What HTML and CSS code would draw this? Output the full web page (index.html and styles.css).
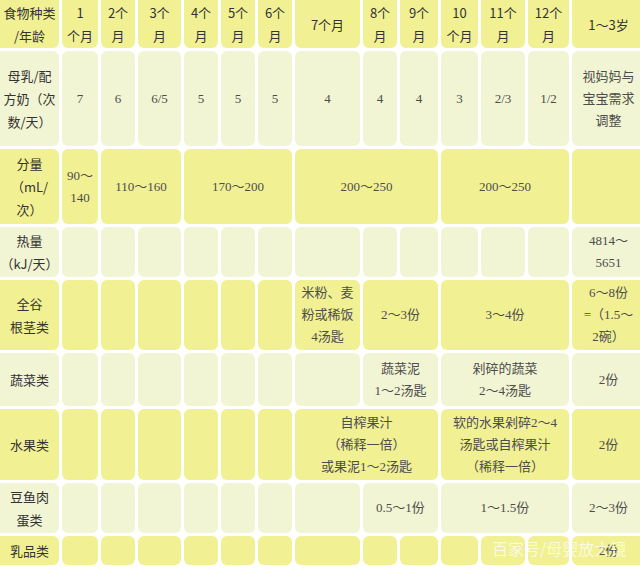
FILE: index.html
```html
<!DOCTYPE html>
<html lang="zh">
<head>
<meta charset="utf-8">
<link rel="stylesheet" href="styles.css">
</head>
<body>
<div class="frame">
<div class="grid">
  <!-- header -->
  <div class="c y lab">食物种类<br>/年龄</div>
  <div class="c y hd">1<br>个月</div>
  <div class="c y hd">2个<br>月</div>
  <div class="c y hd">3个<br>月</div>
  <div class="c y hd">4个<br>月</div>
  <div class="c y hd">5个<br>月</div>
  <div class="c y hd">6个<br>月</div>
  <div class="c y hd">7个月</div>
  <div class="c y hd">8个<br>月</div>
  <div class="c y hd">9个<br>月</div>
  <div class="c y hd">10<br>个月</div>
  <div class="c y hd">11个<br>月</div>
  <div class="c y hd">12个<br>月</div>
  <div class="c y hd">1～3岁</div>

  <!-- 母乳 -->
  <div class="c p lab">母乳/配<br>方奶（次<br>数/天）</div>
  <div class="c p d">7</div>
  <div class="c p d">6</div>
  <div class="c p d">6/5</div>
  <div class="c p d">5</div>
  <div class="c p d">5</div>
  <div class="c p d">5</div>
  <div class="c p d">4</div>
  <div class="c p d">4</div>
  <div class="c p d">4</div>
  <div class="c p d">3</div>
  <div class="c p d">2/3</div>
  <div class="c p d">1/2</div>
  <div class="c p d">视妈妈与<br>宝宝需求<br>调整</div>

  <!-- 分量 -->
  <div class="c y lab">分量<br>（mL/<br>次）</div>
  <div class="c y d">90～<br>140</div>
  <div class="c y d s2">110～160</div>
  <div class="c y d s3">170～200</div>
  <div class="c y d s3">200～250</div>
  <div class="c y d s3">200～250</div>
  <div class="c y d"></div>

  <!-- 热量 -->
  <div class="c p lab">热量<br>（kJ/天）</div>
  <div class="c p"></div><div class="c p"></div><div class="c p"></div><div class="c p"></div><div class="c p"></div><div class="c p"></div>
  <div class="c p"></div><div class="c p"></div><div class="c p"></div><div class="c p"></div><div class="c p"></div><div class="c p"></div>
  <div class="c p d">4814～<br>5651</div>

  <!-- 全谷 -->
  <div class="c y lab">全谷<br>根茎类</div>
  <div class="c y"></div><div class="c y"></div><div class="c y"></div><div class="c y"></div><div class="c y"></div><div class="c y"></div>
  <div class="c y d">米粉、麦<br>粉或稀饭<br>4汤匙</div>
  <div class="c y d s2">2～3份</div>
  <div class="c y d s3">3～4份</div>
  <div class="c y d">6～8份<br>=（1.5～<br>2碗）</div>

  <!-- 蔬菜 -->
  <div class="c p lab">蔬菜类</div>
  <div class="c p"></div><div class="c p"></div><div class="c p"></div><div class="c p"></div><div class="c p"></div><div class="c p"></div>
  <div class="c p"></div>
  <div class="c p d s2">蔬菜泥<br>1～2汤匙</div>
  <div class="c p d s3">剁碎的蔬菜<br>2～4汤匙</div>
  <div class="c p d">2份</div>

  <!-- 水果 -->
  <div class="c y lab">水果类</div>
  <div class="c y"></div><div class="c y"></div><div class="c y"></div><div class="c y"></div><div class="c y"></div><div class="c y"></div>
  <div class="c y d s3">自榨果汁<br>（稀释一倍）<br>或果泥1～2汤匙</div>
  <div class="c y d s3">软的水果剁碎2～4<br>汤匙或自榨果汁<br>（稀释一倍）</div>
  <div class="c y d">2份</div>

  <!-- 豆鱼肉蛋 -->
  <div class="c p lab">豆鱼肉<br>蛋类</div>
  <div class="c p"></div><div class="c p"></div><div class="c p"></div><div class="c p"></div><div class="c p"></div><div class="c p"></div>
  <div class="c p"></div>
  <div class="c p d s2">0.5～1份</div>
  <div class="c p d s3">1～1.5份</div>
  <div class="c p d">2～3份</div>

  <!-- 乳品 -->
  <div class="c y lab">乳品类</div>
  <div class="c y"></div><div class="c y"></div><div class="c y"></div><div class="c y"></div><div class="c y"></div><div class="c y"></div>
  <div class="c y"></div><div class="c y"></div><div class="c y"></div><div class="c y"></div><div class="c y"></div><div class="c y"></div>
  <div class="c y d">2份</div>
</div>
<div class="mark">百家号/母婴放大镜</div>
</div>
</body>
</html>
```

FILE: styles.css
```css
html, body {
  margin: 0;
  padding: 0;
  background: #ffffff;
}
body {
  width: 640px;
  height: 568px;
  overflow: hidden;
}
.frame {
  position: relative;
  width: 640px;
  height: 568px;
  overflow: hidden;
}
.grid {
  display: grid;
  margin: -5px 0 0 -5px;
  grid-template-columns: 64px 36px 34px 43px 34px 34px 34px 65px 34px 38px 37px 44px 41px 73px;
  grid-template-rows: 53px 95px 75px 50px 70px 53px 71px 50px 29px;
  gap: 3px;
  background: #ffffff;
}
.c {
  border-radius: 6px;
  display: flex;
  align-items: center;
  justify-content: center;
  text-align: center;
}
.y { background: #f1f093; }
.p { background: #f2f5d3; }
.lab {
  font-family: "Noto Sans CJK SC", "Noto Sans", sans-serif;
  font-size: 13px;
  line-height: 23px;
  color: #333333;
  padding-left: 5px;
}
.grid > .lab:first-child,
.grid > .hd {
  padding-top: 5px;
}
.hd {
  font-family: "Noto Sans CJK SC", "Noto Sans", sans-serif;
  font-size: 13px;
  line-height: 23px;
  color: #333333;
}
.d {
  font-family: "Liberation Serif", "Noto Sans CJK SC", serif;
  font-size: 13px;
  line-height: 22px;
  color: #4d4d4d;
  white-space: nowrap;
}
.s2 { grid-column: span 2; }
.s3 { grid-column: span 3; }
.mark {
  position: absolute;
  left: 492px;
  top: 537px;
  font-family: "Noto Sans CJK SC", "Noto Sans", sans-serif;
  font-size: 16px;
  line-height: 22px;
  color: rgba(255, 255, 255, 0.7);
  white-space: nowrap;
}
```
